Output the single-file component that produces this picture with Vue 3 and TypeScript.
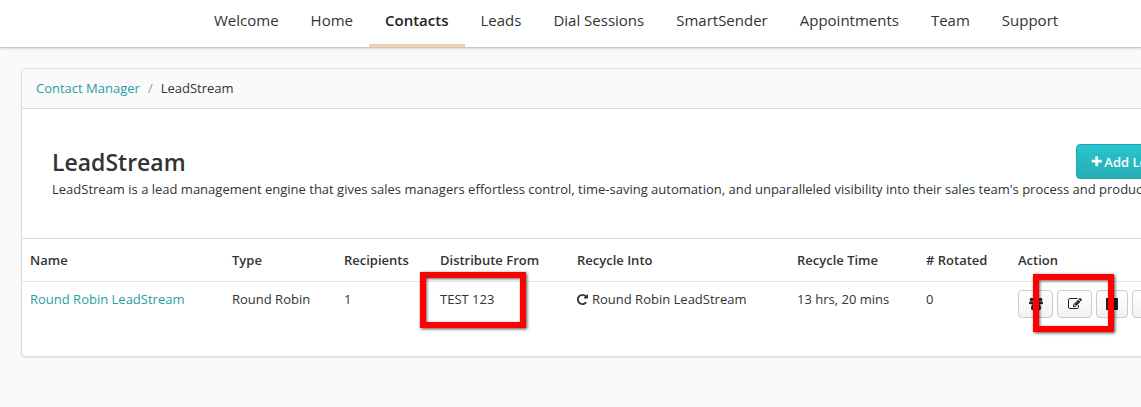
<script setup lang="ts">
interface NavItem {
  label: string
  active?: boolean
}

interface Stream {
  name: string
  type: string
  recipients: number
  source: string
  recycleInto: string
  recycleTime: string
  rotated: number
}

const nav: NavItem[] = [
  { label: 'Welcome' },
  { label: 'Home' },
  { label: 'Contacts', active: true },
  { label: 'Leads' },
  { label: 'Dial Sessions' },
  { label: 'SmartSender' },
  { label: 'Appointments' },
  { label: 'Team' },
  { label: 'Support' },
]

const columns: { key: string; label: string }[] = [
  { key: 'name', label: 'Name' },
  { key: 'type', label: 'Type' },
  { key: 'recipients', label: 'Recipients' },
  { key: 'source', label: 'Distribute From' },
  { key: 'into', label: 'Recycle Into' },
  { key: 'time', label: 'Recycle Time' },
  { key: 'rotated', label: '# Rotated' },
  { key: 'action', label: 'Action' },
]

const streams: Stream[] = [
  {
    name: 'Round Robin LeadStream',
    type: 'Round Robin',
    recipients: 1,
    source: 'TEST 123',
    recycleInto: 'Round Robin LeadStream',
    recycleTime: '13 hrs, 20 mins',
    rotated: 0,
  },
]
</script>

<template>
  <div class="page">
    <nav class="topnav">
      <a v-for="item in nav" :key="item.label" href="#" :class="{ active: item.active }">{{ item.label }}</a>
    </nav>

    <main class="card">
      <div class="crumbs">
        <a href="#">Contact Manager</a>
        <span class="slash">/</span>
        <span>LeadStream</span>
      </div>

      <header class="intro">
        <div class="intro-row">
          <h1>LeadStream</h1>
          <button type="button" class="primary">
            <svg viewBox="100 100 1536 1536" aria-hidden="true"><path d="M1600 736v192q0 40-28 68t-68 28h-416v416q0 40-28 68t-68 28h-192q-40 0-68-28t-28-68v-416h-416q-40 0-68-28t-28-68v-192q0-40 28-68t68-28h416v-416q0-40 28-68t68-28h192q40 0 68 28t28 68v416h416q40 0 68 28t28 68z" /></svg>
            <span>Add LeadStream</span>
          </button>
        </div>
        <p>LeadStream is a lead management engine that gives sales managers effortless control, time-saving automation, and unparalleled visibility into their sales team's process and productivity.</p>
      </header>

      <table>
        <colgroup>
          <col v-for="c in columns" :key="c.key" :class="'col-' + c.key">
        </colgroup>
        <thead>
          <tr>
            <th v-for="c in columns" :key="c.key" scope="col">{{ c.label }}</th>
          </tr>
        </thead>
        <tbody>
          <tr v-for="s in streams" :key="s.name">
            <td><a href="#">{{ s.name }}</a></td>
            <td>{{ s.type }}</td>
            <td>{{ s.recipients }}</td>
            <td class="marked">{{ s.source }}<span class="callout callout-source"></span></td>
            <td>
              <div class="into">
                <svg class="recycle" viewBox="128 128 1536 1536" aria-hidden="true"><path d="M1664 256v448q0 26-19 45t-45 19h-448q-42 0-59-40-17-39 14-69l138-138q-148-137-349-137-104 0-198.5 40.5t-163.5 109.5-109.5 163.5-40.5 198.5 40.5 198.5 109.5 163.5 163.5 109.5 198.5 40.5q119 0 225-52t179-147q7-10 23-12 15 0 25 9l137 138q9 8 9.5 20.5t-7.5 22.5q-109 132-264 204.5t-327 72.5q-156 0-298-61t-245-164-164-245-61-298 61-298 164-245 245-164 298-61q147 0 284.5 55.5t244.5 156.5l130-129q29-31 70-14 39 17 39 59z" /></svg>
                <span>{{ s.recycleInto }}</span>
              </div>
            </td>
            <td>{{ s.recycleTime }}</td>
            <td>{{ s.rotated }}</td>
            <td class="marked">
              <div class="actions">
                <button type="button" aria-label="Recipients" class="wide">
                  <svg viewBox="0 0 14 14" aria-hidden="true"><circle cx="2.6" cy="2.6" r="1.9" /><circle cx="11.4" cy="2.600" r="1.9" /><circle cx="7" cy="4.400" r="2.800" /><path d="M0 6.500q0-2.200 1-2.200 1.500.9 3 .3Q3.600 6.200 4.600 7.300H1.300Q0 7.300 0 6.500zM14 6.500q0-2.200-1-2.200-1.500.9-3 .3Q10.400 6.200 9.400 7.300h3.300Q14 7.300 14 6.500zM4.500 7.200Q7 9 9.500 7.200q2.500.2 2.500 4 0 2-1.800 2H3.800q-1.800 0-1.800-2 0-3.800 2.500-4z" /></svg>
                </button>
                <button type="button" aria-label="Edit" class="wide">
                  <svg viewBox="0 0 1792 1792" aria-hidden="true"><path d="M888 1184l116-116-152-152-116 116v56h96v96h56zm440-720q-16-16-33 1l-350 350q-17 17-1 33t33-1l350-350q17-17 1-33zm80 594v190q0 119-84.5 203.5t-203.5 84.5h-832q-119 0-203.5-84.5t-84.5-203.5v-832q0-119 84.5-203.5t203.5-84.5h832q63 0 117 25 15 7 18 23 3 17-9 29l-49 49q-14 14-32 8-23-6-45-6h-832q-66 0-113 47t-47 113v832q0 66 47 113t113 47h832q66 0 113-47t47-113v-126q0-13 9-22l64-64q15-15 35-7t20 29zm-96-738l288 288-672 672h-288v-288zm444 132l-92 92-288-288 92-92q28-28 68-28t68 28l152 152q28 28 28 68t-28 68z" /></svg>
                </button>
                <button type="button" aria-label="Stop">
                  <svg viewBox="0 0 14 14" aria-hidden="true"><path d="M1 1h12v12H1z" /></svg>
                </button>
                <button type="button" aria-label="Delete">
                  <svg viewBox="0 0 14 14" aria-hidden="true"><path d="M2 4l2-2 3 3 3-3 2 2-3 3 3 3-2 2-3-3-3 3-2-2 3-3z" /></svg>
                </button>
              </div>
              <span class="callout callout-edit"></span>
            </td>
          </tr>
        </tbody>
      </table>
    </main>
  </div>
</template>

<style>
body {
  background: #fafafa;
}
</style>

<style scoped>
.page {
  min-height: 100vh;
  overflow: hidden;
  box-sizing: border-box;
  background: #fafafa;
  color: #333;
  font: 13px/20px "Open Sans", "Noto Sans", sans-serif;
}

a {
  color: #279ea3;
  text-decoration: none;
}

.topnav {
  display: flex;
  height: 47px;
  padding-left: 198px;
  background: #fff;
  border-bottom: 1px solid #c8c8c8;
  box-shadow: 0 1px 2px rgba(0, 0, 0, 0.15);
}

.topnav a {
  box-sizing: border-box;
  padding: 10px 16px 0;
  color: #333;
  font-size: 15px;
  white-space: nowrap;
}

.topnav a.active {
  border-bottom: 3px solid #f0d0b0;
  color: #222;
  font-weight: 600;
}

.card {
  margin: 20px -120px 50px 21px;
  background: #fff;
  border: 1px solid #dcdcdc;
  border-radius: 5px;
  box-shadow: 0 1px 2px rgba(0, 0, 0, 0.1);
}

.crumbs {
  display: flex;
  gap: 8px;
  padding: 9px 14px 10px;
  background: #fafafa;
  border-bottom: 1px solid #dcdcdc;
  border-radius: 5px 5px 0 0;
}

.slash {
  color: #999;
}

.intro {
  padding: 35px 37px 39px 30px;
}

.intro-row {
  display: flex;
  justify-content: space-between;
  align-items: flex-start;
  height: 35px;
}

h1 {
  margin: 0;
  font-size: 23px;
  line-height: 36px;
  font-weight: 600;
}

.intro p {
  margin: 0;
  white-space: nowrap;
}

.primary {
  display: flex;
  align-items: center;
  gap: 2px;
  height: 35px;
  padding: 0 14px;
  border: 1px solid #22a5ad;
  border-radius: 4px;
  background: linear-gradient(#29c5cc, #25adb5);
  color: #fff;
  font: 600 13px/20px "Open Sans", "Noto Sans", sans-serif;
  white-space: nowrap;
}

svg {
  width: 14px;
  height: 14px;
  fill: currentColor;
}

.primary svg {
  width: 11px;
  height: 11px;
}

table {
  width: 100%;
  table-layout: fixed;
  border-collapse: collapse;
  border-top: 1px solid #dcdcdc;
}

th,
td {
  padding: 7px 8px 9px;
  text-align: left;
  vertical-align: top;
  white-space: nowrap;
}

th {
  padding: 11px 8px;
  font-weight: 600;
}

td {
  height: 58px;
  border-top: 1px solid #e6e6e6;
}

.col-name { width: 202px; }
.col-type { width: 112px; }
.col-recipients { width: 96px; }
.col-source { width: 137px; }
.col-into { width: 220px; }
.col-time { width: 129px; }
.col-rotated { width: 92px; }

.into {
  display: flex;
  align-items: center;
  gap: 4px;
}

.recycle {
  width: 11px;
  height: 11px;
}

.marked {
  position: relative;
}

.actions {
  display: flex;
  gap: 4px;
  padding-top: 1px;
}

.actions button {
  display: flex;
  align-items: center;
  justify-content: center;
  width: 32px;
  height: 28px;
  padding: 0;
  border: 1px solid #ccc;
  border-radius: 4px;
  background: linear-gradient(#fff, #f2f2f2);
  color: #222;
}

.actions button.wide {
  width: 35px;
}

.callout {
  position: absolute;
  box-sizing: border-box;
  border: 6px solid #f00;
  box-shadow: 1px 1px 3px rgba(0, 0, 0, 0.7), inset 1px 1px 3px rgba(0, 0, 0, 0.6);
  pointer-events: none;
}

.callout-source {
  top: -10px;
  left: -12px;
  width: 106px;
  height: 56px;
}

.callout-edit {
  top: -8px;
  left: 23px;
  width: 81px;
  height: 58px;
}
</style>
